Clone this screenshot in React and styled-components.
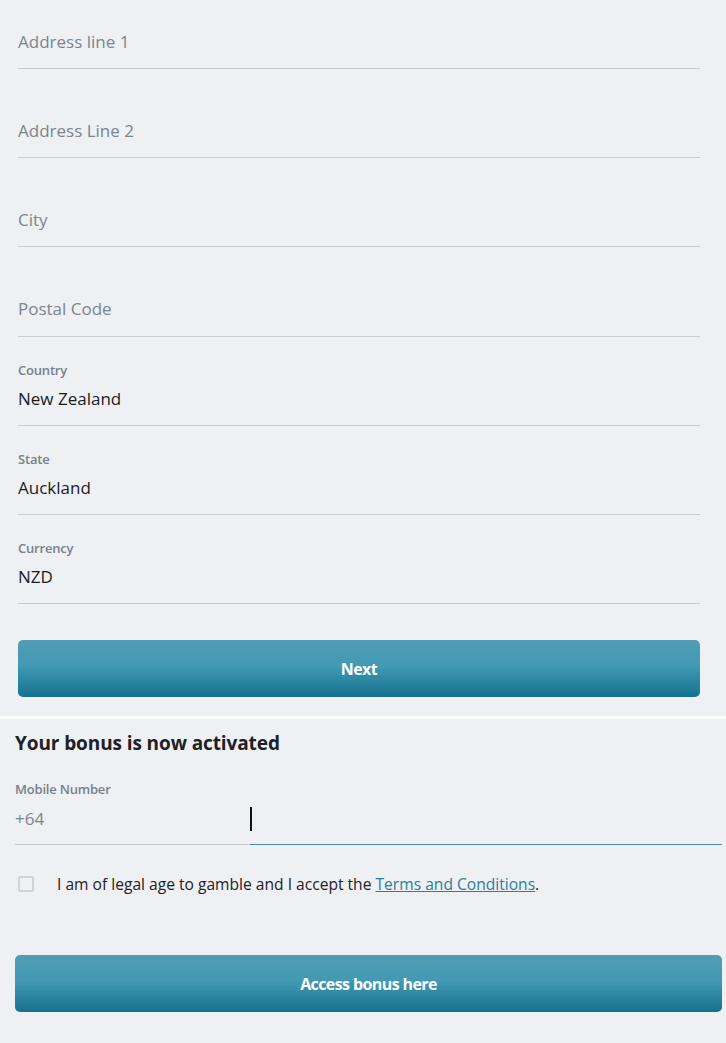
import React from "react";
import styled, { createGlobalStyle } from "styled-components";

const Global = createGlobalStyle`
  html, body { margin: 0; padding: 0; background: #eef0f3; }
  body { font-family: "Open Sans", "Noto Sans", Arial, sans-serif; color: #1d2124; }
  * { box-sizing: border-box; }
`;

const Page = styled.div`
  width: 726px;
  min-height: 1043px;
  background: #eef0f3;
  overflow: hidden;
`;

const FormSection = styled.div`
  display: flex;
  flex-direction: column;
  padding: 0 26px 19px 18px;
`;

const Field = styled.div`
  display: flex;
  flex-direction: column;
  padding-top: ${(p) => (p.$first ? 30 : p.$label ? 24 : 50)}px;
  padding-bottom: ${(p) => (p.$tall ? 15 : 14)}px;
  border-bottom: 1px solid #c9cdd1;
`;

const Label = styled.div`
  font-size: 13px;
  line-height: 18px;
  font-weight: 600;
  color: #76818b;
  margin-bottom: 8px;
  letter-spacing: -0.2px;
`;

const Value = styled.div`
  font-size: 17px;
  line-height: 24px;
  color: ${(p) => (p.$placeholder ? "#7a868e" : "#181c1f")};
`;

const Button = styled.button`
  display: flex;
  align-items: center;
  justify-content: center;
  width: 100%;
  height: 57px;
  border: none;
  border-radius: 5px;
  background: linear-gradient(180deg, #509db5 0%, #4399b3 45%, #14728f 100%);
  color: #ffffff;
  font-family: "Open Sans", "Noto Sans", Arial, sans-serif;
  font-weight: 700;
  font-size: 16px;
  letter-spacing: -0.6px;
  cursor: pointer;
  margin-top: ${(p) => p.$mt || 0}px;
`;

const Separator = styled.div`
  height: 3px;
  background: #ffffff;
`;

const BonusSection = styled.div`
  display: flex;
  flex-direction: column;
  padding: 11px 4px 0 15px;
`;

const Heading = styled.h2`
  margin: 0;
  font-size: 19px;
  line-height: 26px;
  font-weight: 700;
  color: #1d2124;
  letter-spacing: -0.1px;
`;

const PhoneLabel = styled(Label)`
  margin-top: 24px;
  margin-bottom: 5px;
`;

const PhoneRow = styled.div`
  display: flex;
  align-items: stretch;
`;

const Prefix = styled.div`
  width: 235px;
  flex: none;
  font-size: 17px;
  line-height: 24px;
  color: #7a868e;
  padding: 4px 0 13px;
  border-bottom: 1px solid #c9cdd1;
`;

const PhoneInput = styled.div`
  flex: 1;
  display: flex;
  align-items: flex-start;
  padding: 4px 0 13px;
  border-bottom: 1px solid #4a8fb0;
`;

const Caret = styled.span`
  display: block;
  width: 2px;
  height: 24px;
  background: #111;
`;

const CheckRow = styled.label`
  display: flex;
  align-items: center;
  gap: 23px;
  margin-top: 28px;
  padding-left: 3px;
  font-size: 15.6px;
  color: #1d2124;
`;

const Box = styled.span`
  width: 16px;
  height: 16px;
  flex: none;
  border: 2px solid #cfd3d7;
  border-radius: 2px;
  background: #eef0f3;
`;

const Link = styled.a`
  color: #2a7f9c;
  text-decoration: underline;
`;

export default function App() {
  return (
    <Page>
      <Global />
      <FormSection>
        <Field $first>
          <Value $placeholder>Address line 1</Value>
        </Field>
        <Field>
          <Value $placeholder>Address Line 2</Value>
        </Field>
        <Field>
          <Value $placeholder>City</Value>
        </Field>
        <Field $tall>
          <Value $placeholder>Postal Code</Value>
        </Field>
        <Field $label>
          <Label>Country</Label>
          <Value>New Zealand</Value>
        </Field>
        <Field $label>
          <Label>State</Label>
          <Value>Auckland</Value>
        </Field>
        <Field $label>
          <Label>Currency</Label>
          <Value>NZD</Value>
        </Field>
        <Button $mt={36}>Next</Button>
      </FormSection>
      <Separator />
      <BonusSection>
        <Heading>Your bonus is now activated</Heading>
        <PhoneLabel>Mobile Number</PhoneLabel>
        <PhoneRow>
          <Prefix>+64</Prefix>
          <PhoneInput>
            <Caret />
          </PhoneInput>
        </PhoneRow>
        <CheckRow>
          <Box />
          <span>
            I am of legal age to gamble and I accept the{" "}
            <Link href="#">Terms and Conditions</Link>.
          </span>
        </CheckRow>
        <Button $mt={60}>Access bonus here</Button>
      </BonusSection>
    </Page>
  );
}
